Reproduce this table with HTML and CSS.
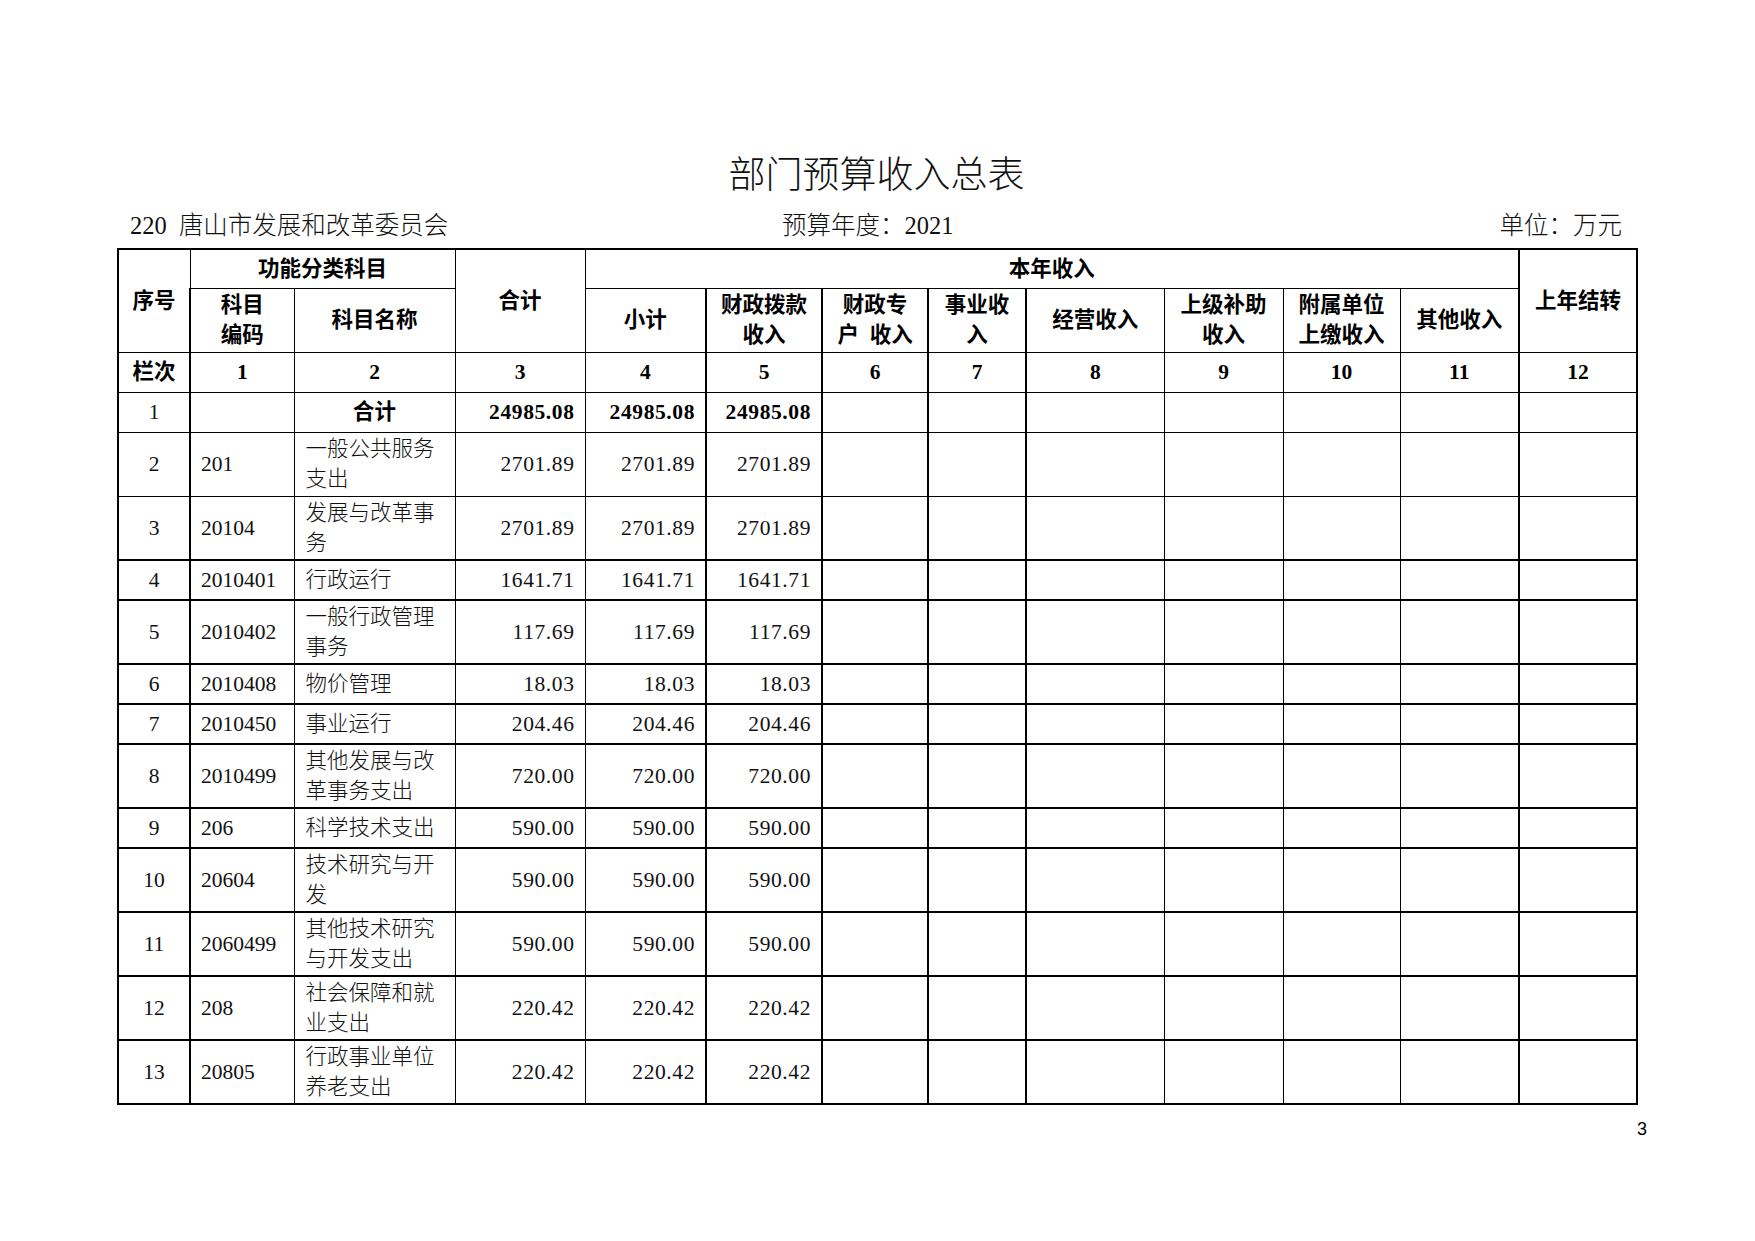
FILE: index.html
```html
<!DOCTYPE html>
<html lang="zh-CN">
<head>
<meta charset="utf-8">
<title>部门预算收入总表</title>
<link rel="stylesheet" href="styles.css">
</head>
<body>
<div class="page">
  <h1 class="title">部门预算收入总表</h1>
  <div class="meta">
    <span class="meta-left">220 唐山市发展和改革委员会</span>
    <span class="meta-mid">预算年度：2021</span>
    <span class="meta-right">单位：万元</span>
  </div>
  <table class="budget">
    <colgroup>
      <col class="c1"><col class="c2"><col class="c3"><col class="c4"><col class="c5"><col class="c6"><col class="c7"><col class="c8"><col class="c9"><col class="c10"><col class="c11"><col class="c12"><col class="c13">
    </colgroup>
    <thead>
      <tr class="h1">
        <th rowspan="2">序号</th>
        <th colspan="2">功能分类科目</th>
        <th rowspan="2">合计</th>
        <th colspan="8">本年收入</th>
        <th rowspan="2" class="thick-l">上年结转</th>
      </tr>
      <tr class="h2">
        <th class="thick-l">科目<br>编码</th>
        <th>科目名称</th>
        <th>小计</th>
        <th class="thick-l">财政拨款<br>收入</th>
        <th class="thick-l">财政专<br>户&nbsp;&nbsp;收入</th>
        <th class="thick-l">事业收<br>入</th>
        <th class="thick-l">经营收入</th>
        <th>上级补助<br>收入</th>
        <th>附属单位<br>上缴收入</th>
        <th>其他收入</th>
      </tr>
      <tr class="h3">
        <th>栏次</th><th>1</th><th>2</th><th>3</th><th>4</th><th>5</th><th>6</th><th>7</th><th>8</th><th>9</th><th>10</th><th>11</th><th>12</th>
      </tr>
    </thead>
    <tbody>
      <tr class="s total">
        <td class="no">1</td><td class="code"></td><td class="name center">合计</td>
        <td class="num">24985.08</td><td class="num">24985.08</td><td class="num">24985.08</td>
        <td></td><td></td><td></td><td></td><td></td><td></td><td></td>
      </tr>
      <tr class="d">
        <td class="no">2</td><td class="code">201</td><td class="name">一般公共服务<br>支出</td>
        <td class="num">2701.89</td><td class="num">2701.89</td><td class="num">2701.89</td>
        <td></td><td></td><td></td><td></td><td></td><td></td><td></td>
      </tr>
      <tr class="d">
        <td class="no">3</td><td class="code">20104</td><td class="name">发展与改革事<br>务</td>
        <td class="num">2701.89</td><td class="num">2701.89</td><td class="num">2701.89</td>
        <td></td><td></td><td></td><td></td><td></td><td></td><td></td>
      </tr>
      <tr class="s heavy">
        <td class="no">4</td><td class="code">2010401</td><td class="name">行政运行</td>
        <td class="num">1641.71</td><td class="num">1641.71</td><td class="num">1641.71</td>
        <td></td><td></td><td></td><td></td><td></td><td></td><td></td>
      </tr>
      <tr class="d heavy">
        <td class="no">5</td><td class="code">2010402</td><td class="name">一般行政管理<br>事务</td>
        <td class="num">117.69</td><td class="num">117.69</td><td class="num">117.69</td>
        <td></td><td></td><td></td><td></td><td></td><td></td><td></td>
      </tr>
      <tr class="s heavy">
        <td class="no">6</td><td class="code">2010408</td><td class="name">物价管理</td>
        <td class="num">18.03</td><td class="num">18.03</td><td class="num">18.03</td>
        <td></td><td></td><td></td><td></td><td></td><td></td><td></td>
      </tr>
      <tr class="s heavy">
        <td class="no">7</td><td class="code">2010450</td><td class="name">事业运行</td>
        <td class="num">204.46</td><td class="num">204.46</td><td class="num">204.46</td>
        <td></td><td></td><td></td><td></td><td></td><td></td><td></td>
      </tr>
      <tr class="d heavy">
        <td class="no">8</td><td class="code">2010499</td><td class="name">其他发展与改<br>革事务支出</td>
        <td class="num">720.00</td><td class="num">720.00</td><td class="num">720.00</td>
        <td></td><td></td><td></td><td></td><td></td><td></td><td></td>
      </tr>
      <tr class="s heavy">
        <td class="no">9</td><td class="code">206</td><td class="name">科学技术支出</td>
        <td class="num">590.00</td><td class="num">590.00</td><td class="num">590.00</td>
        <td></td><td></td><td></td><td></td><td></td><td></td><td></td>
      </tr>
      <tr class="d heavy">
        <td class="no">10</td><td class="code">20604</td><td class="name">技术研究与开<br>发</td>
        <td class="num">590.00</td><td class="num">590.00</td><td class="num">590.00</td>
        <td></td><td></td><td></td><td></td><td></td><td></td><td></td>
      </tr>
      <tr class="d heavy">
        <td class="no">11</td><td class="code">2060499</td><td class="name">其他技术研究<br>与开发支出</td>
        <td class="num">590.00</td><td class="num">590.00</td><td class="num">590.00</td>
        <td></td><td></td><td></td><td></td><td></td><td></td><td></td>
      </tr>
      <tr class="d heavy">
        <td class="no">12</td><td class="code">208</td><td class="name">社会保障和就<br>业支出</td>
        <td class="num">220.42</td><td class="num">220.42</td><td class="num">220.42</td>
        <td></td><td></td><td></td><td></td><td></td><td></td><td></td>
      </tr>
      <tr class="d heavy">
        <td class="no">13</td><td class="code">20805</td><td class="name">行政事业单位<br>养老支出</td>
        <td class="num">220.42</td><td class="num">220.42</td><td class="num">220.42</td>
        <td></td><td></td><td></td><td></td><td></td><td></td><td></td>
      </tr>
    </tbody>
  </table>
  <div class="page-no">3</div>
</div>
</body>
</html>
```
FILE: styles.css
```css
html, body {
  margin: 0;
  padding: 0;
  background: #ffffff;
}

.page {
  width: 1755px;
  height: 1241px;
  box-sizing: border-box;
  padding: 150px 0 0 117px;
  color: #000;
  font-family: "Liberation Serif", "Noto Sans CJK SC", serif;
}

.title {
  margin: 0;
  width: 1519px;
  text-align: center;
  font-family: "Noto Sans CJK SC", sans-serif;
  font-weight: 300;
  font-size: 37px;
  line-height: 44px;
  color: #111;
}

.meta {
  margin-top: 17px;
  width: 1492px;
  padding-left: 13px;
  display: grid;
  grid-template-columns: 652px auto 1fr;
  font-size: 24.5px;
  line-height: 30px;
  font-weight: 300;
  color: #111;
}

.meta-left {
  word-spacing: 6px;
}

.meta-right {
  justify-self: end;
}

.budget {
  margin-top: 7px;
  width: 1519px;
  table-layout: fixed;
  border-collapse: collapse;
  border: 2px solid #000;
  font-size: 21.5px;
}

.c1 { width: 72px; }
.c2 { width: 104px; }
.c3 { width: 161px; }
.c4 { width: 130px; }
.c5 { width: 121px; }
.c6 { width: 116px; }
.c7 { width: 106px; }
.c8 { width: 98px; }
.c9 { width: 138px; }
.c10 { width: 119px; }
.c11 { width: 117px; }
.c12 { width: 119px; }
.c13 { width: 118px; }

.budget th,
.budget td {
  border: 1px solid #000;
  padding: 0 4px;
  vertical-align: middle;
  line-height: 30px;
  overflow: hidden;
  white-space: nowrap;
}

.budget th {
  font-family: "Liberation Serif", "Noto Sans CJK SC", serif;
  font-weight: 700;
  text-align: center;
  color: #000;
}

.budget th.thick-l { border-left-width: 2px; }

.h1 { height: 39px; }
.h2 { height: 64px; }
.h3 { height: 40px; }
.h3 th:nth-child(2),
.h3 th:nth-child(6),
.h3 th:nth-child(7),
.h3 th:nth-child(8),
.h3 th:nth-child(9),
.h3 th:nth-child(13) { border-left-width: 2px; }

.budget tr.s { height: 40px; }
.budget tr.d { height: 64px; }

.budget td {
  color: #111;
  font-weight: 300;
}

.budget td:nth-child(2),
.budget td:nth-child(6),
.budget td:nth-child(7),
.budget td:nth-child(8),
.budget td:nth-child(9),
.budget td:nth-child(13) { border-left-width: 2px; }

.budget tr.heavy td { border-top-width: 2px; }

.budget td.no { text-align: center; }
.budget td.code { text-align: left; padding-left: 10px; }
.budget td.name { text-align: left; padding-left: 11px; }
.budget td.name.center { text-align: center; padding-left: 4px; }
.budget td.num { text-align: right; padding-right: 10px; letter-spacing: 0.6px; }

.budget tr.total td.name,
.budget tr.total td.num {
  font-weight: 700;
  color: #000;
}

.page-no {
  width: 1530px;
  margin-top: 14px;
  text-align: right;
  font-family: "Liberation Sans", sans-serif;
  font-size: 18px;
  line-height: 20px;
}
```
